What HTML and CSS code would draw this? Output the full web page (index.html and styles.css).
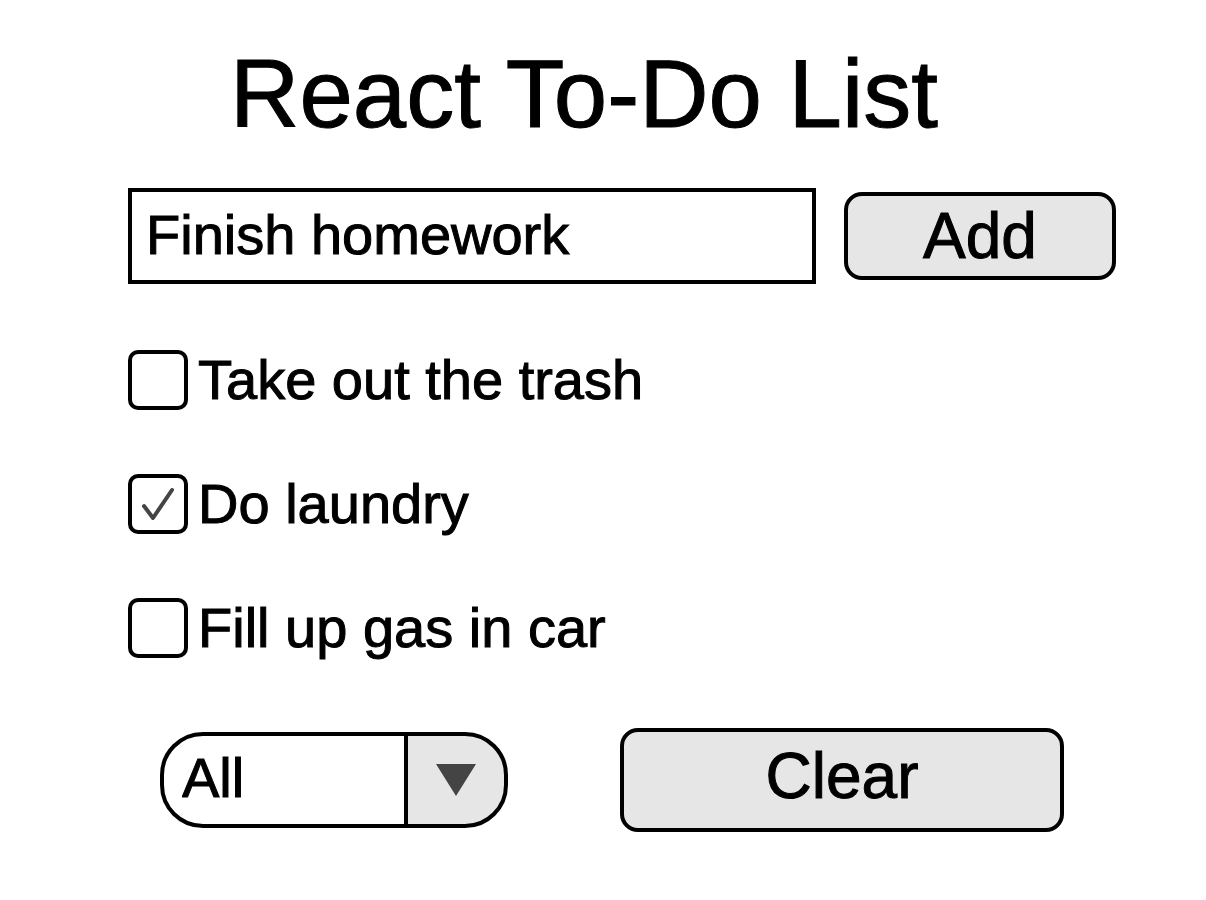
FILE: index.html
```html
<!DOCTYPE html>
<html lang="en">
<head>
<meta charset="utf-8">
<meta name="viewport" content="width=device-width, initial-scale=1">
<title>React To-Do List</title>
<link rel="stylesheet" href="styles.css">
</head>
<body>
<main class="app">
  <h1 class="title">React To-Do List</h1>
  <form class="add-form">
    <input class="task-input" type="text" value="Finish homework" aria-label="New task">
    <button class="button" type="button">Add</button>
  </form>
  <ul class="tasks">
    <li><label class="task"><span class="check-wrap"><input class="check" type="checkbox"><svg class="tick" viewBox="0 0 60 60" aria-hidden="true"><path d="M16 32L25 44L44 16"/></svg></span>Take out the trash</label></li>
    <li><label class="task"><span class="check-wrap"><input class="check" type="checkbox" checked><svg class="tick" viewBox="0 0 60 60" aria-hidden="true"><path d="M16 32L25 44L44 16"/></svg></span>Do laundry</label></li>
    <li><label class="task"><span class="check-wrap"><input class="check" type="checkbox"><svg class="tick" viewBox="0 0 60 60" aria-hidden="true"><path d="M16 32L25 44L44 16"/></svg></span>Fill up gas in car</label></li>
  </ul>
  <div class="footer">
    <div class="select-wrap">
      <select class="filter" aria-label="Filter tasks"><option>All</option><option>Active</option><option>Done</option></select>
      <svg class="arrow" viewBox="0 0 40 32" aria-hidden="true"><path d="M0 0H40L20 32Z"/></svg>
    </div>
    <button class="button clear" type="button">Clear</button>
  </div>
</main>
</body>
</html>
```
FILE: styles.css
```css
* { box-sizing: border-box; }

body {
  margin: 0;
  background: #fff;
  color: #000;
  font-family: "Liberation Sans", Arial, sans-serif;
  font-size: 56px;
  line-height: 64px;
  -webkit-text-stroke: 1px #000;
}

.app { padding: 38px 90px 0 128px; }

.title {
  margin: 0 76px 38px 0;
  font-size: 96px;
  font-weight: 400;
  line-height: 112px;
  text-align: center;
  white-space: nowrap;
}

.add-form {
  display: flex;
  align-items: center;
  gap: 28px;
}

.task-input {
  flex: 1;
  min-width: 0;
  height: 96px;
  padding: 0 14px 4px;
  border: 4px solid #000;
  border-radius: 0;
  outline: 0;
  background: #fff;
  color: inherit;
  font: inherit;
}

.button {
  width: 272px;
  height: 88px;
  padding: 0;
  border: 4px solid #000;
  border-radius: 18px;
  background: #e6e6e6;
  color: inherit;
  font: inherit;
  font-size: 64px;
  line-height: 72px;
}

.tasks {
  display: flex;
  flex-direction: column;
  gap: 60px;
  margin: 64px 0 68px;
  padding: 0;
  list-style: none;
}

.task {
  display: flex;
  align-items: center;
  gap: 10px;
}

.check-wrap {
  display: flex;
  position: relative;
}

.check {
  appearance: none;
  width: 60px;
  height: 60px;
  margin: 0;
  border: 4px solid #000;
  border-radius: 10px;
  background: #fff;
}

.tick {
  position: absolute;
  inset: 0;
  fill: none;
  stroke: #444;
  stroke-width: 4;
  stroke-linecap: round;
  stroke-linejoin: round;
  pointer-events: none;
}

.check:not(:checked) + .tick { display: none; }

.footer {
  display: flex;
  align-items: center;
  gap: 112px;
  padding-left: 32px;
}

.select-wrap {
  position: relative;
  width: 348px;
}

.filter {
  appearance: none;
  display: block;
  width: 100%;
  height: 96px;
  padding: 0 104px 4px 18px;
  border: 4px solid #000;
  border-radius: 43px;
  background: linear-gradient(90deg, #fff 240px, #000 240px, #000 244px, #e6e6e6 244px);
  color: inherit;
  font: inherit;
}

.arrow {
  position: absolute;
  top: 32px;
  right: 32px;
  width: 40px;
  height: 32px;
  fill: #444;
  pointer-events: none;
}

.clear {
  width: 444px;
  height: 104px;
  padding-bottom: 8px;
}
```
